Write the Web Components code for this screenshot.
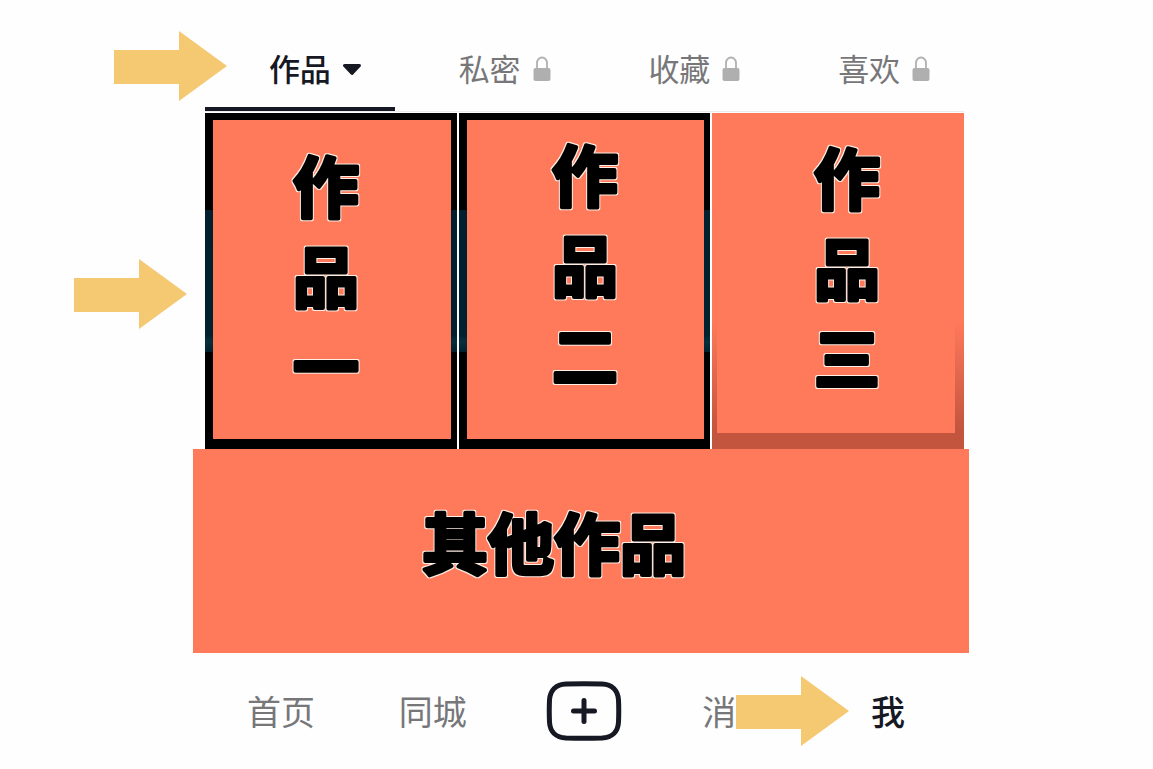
<!DOCTYPE html>
<html lang="zh-CN">
<head>
  <meta charset="utf-8">
  <meta name="viewport" content="width=device-width, initial-scale=1">
  <title>作品</title>
  <style>
    :root {
      --ink: #161823;
      --muted: #77777a;
      --coral: #ff795b;
      --arrow: #f4c972;
    }
    body {
      background: #fefefe;
      color: var(--ink);
      font-family: "Noto Sans CJK SC", sans-serif;
      margin: 0;
    }
  </style>
</head>
<body>
  <profile-page>
    <tab-bar slot="tabs">
      <tab-item active>作品</tab-item>
      <tab-item locked>私密</tab-item>
      <tab-item locked>收藏</tab-item>
      <tab-item locked>喜欢</tab-item>
    </tab-bar>
    <work-grid slot="works">
      <work-card class="first" label="作品一"></work-card>
      <work-card class="second" label="作品二"></work-card>
      <work-card class="third" label="作品三" frame="shade"></work-card>
    </work-grid>
    <work-banner slot="more" label="其他作品"></work-banner>
    <bottom-nav slot="nav">
      <nav-item>首页</nav-item>
      <nav-item>同城</nav-item>
      <add-button></add-button>
      <nav-item>消<guide-arrow slot="pointer"></guide-arrow></nav-item>
      <nav-item active>我</nav-item>
    </bottom-nav>
  </profile-page>

  <script>
    class BaseElement extends HTMLElement {

      constructor() {
        super()
        const template = document.createElement('template')
        template.innerHTML = this.template()
        this.attachShadow({ mode: 'open' }).appendChild(template.content.cloneNode(true))
      }

    }

    class GuideArrow extends BaseElement {

      template() {
        return `
          <style>
            :host { color: var(--arrow); display: block; width: 113px; }
            svg { display: block; width: 100%; }
          </style>
          <svg viewBox="0 0 113 70" fill="currentColor" aria-hidden="true">
            <path d="M0 19H65V0L113 35L65 70V53H0Z"/>
          </svg>
        `
      }

    }

    class ProfilePage extends BaseElement {

      template() {
        return `
          <style>
            :host { display: block; padding-left: 9px; }
            main { margin: 0 auto; max-width: 776px; }
            .inner { padding: 0 5px 0 12px; position: relative; }
            .pointer { position: absolute; right: 100%; }
            .tabs .pointer { margin-right: -34px; top: 31px; }
            .works .pointer { margin-right: 6px; top: 146px; }
          </style>
          <main>
            <div class="inner tabs">
              <slot name="tabs"></slot>
              <guide-arrow class="pointer"></guide-arrow>
            </div>
            <div class="inner works">
              <slot name="works"></slot>
              <guide-arrow class="pointer"></guide-arrow>
            </div>
            <slot name="more"></slot>
            <div class="inner">
              <slot name="nav"></slot>
            </div>
          </main>
        `
      }

    }

    class TabBar extends BaseElement {

      template() {
        return `
          <style>
            :host { border-bottom: 1px solid #ececec; display: block; margin-bottom: 1px; }
            nav { display: grid; grid-template-columns: repeat(4, 1fr); }
          </style>
          <nav><slot></slot></nav>
        `
      }

    }

    class TabItem extends BaseElement {

      template() {
        const icon = this.hasAttribute('locked')
          ? `<svg width="18" height="26" viewBox="0 0 18 26" aria-hidden="true">
              <path d="M4 14V8a5 5.500 0 0 1 10 0v6" fill="none" stroke="#b0b0b0" stroke-width="1.800"/>
              <rect x="0.500" y="13" width="17" height="13" rx="2" fill="#afafaf"/>
            </svg>`
          : `<svg width="18" height="26" viewBox="0 0 18 26" aria-hidden="true">
              <path d="M1.500 10.500H16.500L9 18.500Z" fill="#161823" stroke="#161823" stroke-width="3" stroke-linejoin="round"/>
            </svg>`
        return `
          <style>
            :host { display: block; }
            button {
              align-items: center;
              background: none;
              border: 0;
              border-bottom: 4px solid transparent;
              color: var(--muted);
              column-gap: 12px;
              cursor: pointer;
              display: grid;
              font: inherit;
              font-size: 31px;
              grid-template-columns: 1fr auto 1fr;
              line-height: 46px;
              padding: 45px 0 16px;
              width: 100%;
            }
            .label { grid-column: 2; }
            :host([active]) button {
              border-bottom-color: var(--ink);
              color: var(--ink);
              font-weight: 500;
            }
          </style>
          <button type="button"><span class="label"><slot></slot></span>${icon}</button>
        `
      }

    }

    class WorkGrid extends BaseElement {

      template() {
        return `
          <style>
            :host { display: grid; gap: 2px; grid-template-columns: repeat(3, 1fr); }
            ::slotted(.first) { --title-padding: 14px 12px 0 0; }
            ::slotted(.second) { --title-padding: 3px 2px 0 0; }
            ::slotted(.third) { --title-padding: 13px 0 0 22px; }
          </style>
          <slot></slot>
        `
      }

    }

    // thick rounded black lettering with a thin cream edge
    class CoverTitle extends BaseElement {

      template() {
        const label = this.getAttribute('label')
        const vertical = this.hasAttribute('vertical')
        const lines = vertical ? [...label] : [label]
        const width = vertical ? 80 : label.length * 66 + 14
        const height = lines.length * 90 + 10
        const texts = lines.map((line, i) =>
          `<text x="${width / 2}" y="${i * 90 + 78}">${line}</text>`).join('')
        return `
          <style>
            :host { display: block; }
            svg { display: block; overflow: visible; }
            g {
              fill: #000;
              font-size: 66px;
              font-weight: 700;
              stroke: #000;
              stroke-linejoin: round;
              stroke-width: 4px;
              text-anchor: middle;
            }
          </style>
          <svg width="${width}" height="${height}" viewBox="0 0 ${width} ${height}">
            <filter id="edge" x="0" y="0" width="${width}" height="${height}" filterUnits="userSpaceOnUse" color-interpolation-filters="sRGB">
              <feMorphology in="SourceAlpha" operator="dilate" radius="1" result="grown"/>
              <feGaussianBlur in="grown" stdDeviation="0.500" result="soft"/>
              <feFlood flood-color="#ffeee4"/>
              <feComposite in2="soft" operator="in" result="rim"/>
              <feMerge><feMergeNode in="rim"/><feMergeNode in="SourceGraphic"/></feMerge>
            </filter>
            <g filter="url(#edge)">${texts}</g>
          </svg>
        `
      }

    }

    class WorkCard extends BaseElement {

      template() {
        return `
          <style>
            :host {
              aspect-ratio: 3 / 4;
              background: linear-gradient(#000 29%, #00202f 29%, #00212f 66%, #082f3c 68%, #00212f 71%, #000 71%);
              box-sizing: border-box;
              display: flex;
              padding: 7px 6px 10px 8px;
            }
            :host([frame="shade"]) {
              background: linear-gradient(var(--coral) 62%, #c3553e 94%);
              padding: 0 9px 16px 5px;
            }
            .cover {
              background: var(--coral);
              box-sizing: border-box;
              display: flex;
              flex: 1;
              justify-content: center;
              padding: var(--title-padding);
            }
          </style>
          <div class="cover">
            <cover-title label="${this.getAttribute('label')}" vertical></cover-title>
          </div>
        `
      }

    }

    class WorkBanner extends BaseElement {

      template() {
        return `
          <style>
            :host {
              background: var(--coral);
              display: flex;
              justify-content: center;
              padding: 42px 54px 62px 0;
            }
          </style>
          <cover-title label="${this.getAttribute('label')}"></cover-title>
        `
      }

    }

    class BottomNav extends BaseElement {

      template() {
        return `
          <style>
            :host { display: block; }
            nav {
              align-items: center;
              display: grid;
              grid-template-columns: repeat(5, 1fr);
              justify-items: center;
              padding: 28px 0;
            }
          </style>
          <nav><slot></slot></nav>
        `
      }

    }

    class NavItem extends BaseElement {

      template() {
        // two characters of room, so a pointer can lie over the second one
        const align = this.hasAttribute('active') ? 'center' : 'left'
        return `
          <style>
            :host { display: block; }
            a {
              color: var(--muted);
              display: block;
              font-size: 34px;
              line-height: 50px;
              position: relative;
              text-align: ${align};
              text-decoration: none;
              white-space: nowrap;
              width: 2em;
            }
            :host([active]) a { color: var(--ink); font-weight: 500; }
            ::slotted([slot="pointer"]) { left: 1em; position: absolute; top: -10px; }
          </style>
          <a href="#"><slot></slot><slot name="pointer"></slot></a>
        `
      }

    }

    class AddButton extends BaseElement {

      template() {
        return `
          <style>
            :host { display: block; }
            button {
              background: none;
              border: 0;
              color: var(--ink);
              cursor: pointer;
              display: block;
              padding: 0;
            }
            svg { display: block; }
          </style>
          <button type="button" aria-label="+">
            <svg width="76" height="60" viewBox="0 0 76 60" fill="none" stroke="currentColor" stroke-width="5" stroke-linecap="round" aria-hidden="true">
              <path d="M20 3Q38 2.500 56 3C66 3.500 72 9 72.500 19Q73 30 72.500 41C72 51 66 56.500 56 57Q38 57.500 20 57C10 56.500 4 51 3.500 41Q3 30 3.500 19C4 9 10 3.500 20 3Z"/>
              <path d="M27.500 30H48.500M38 19.500V40.500"/>
            </svg>
          </button>
        `
      }

    }

    window.customElements.define('guide-arrow', GuideArrow)
    window.customElements.define('cover-title', CoverTitle)
    window.customElements.define('profile-page', ProfilePage)
    window.customElements.define('tab-bar', TabBar)
    window.customElements.define('tab-item', TabItem)
    window.customElements.define('work-grid', WorkGrid)
    window.customElements.define('work-card', WorkCard)
    window.customElements.define('work-banner', WorkBanner)
    window.customElements.define('bottom-nav', BottomNav)
    window.customElements.define('nav-item', NavItem)
    window.customElements.define('add-button', AddButton)
  </script>
</body>
</html>
